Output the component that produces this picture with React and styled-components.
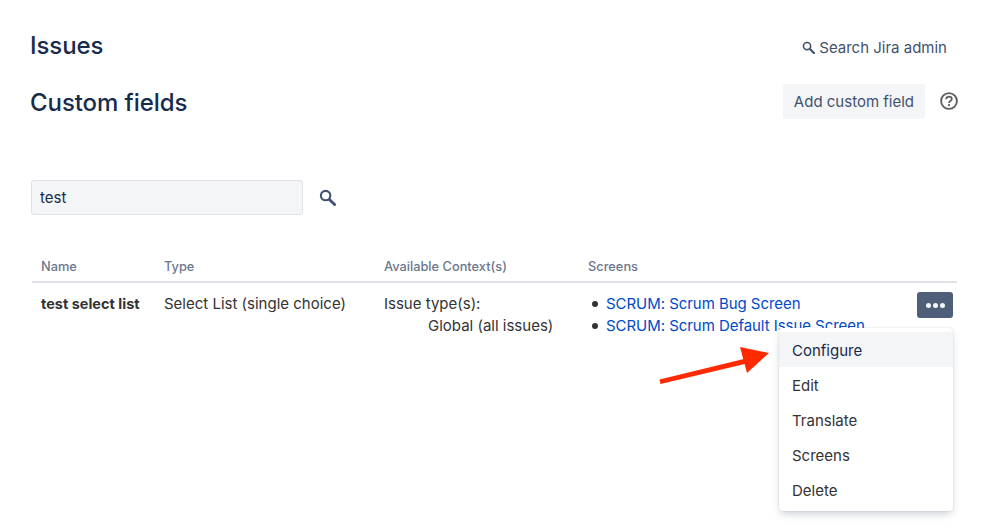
import React from 'react';
import styled, { createGlobalStyle } from 'styled-components';

const GlobalStyle = createGlobalStyle`
  html, body {
    margin: 0;
    background: #fff;
    font-family: Inter, "Liberation Sans", sans-serif;
  }
`;

const Page = styled.div`
  position: relative;
  width: 999px;
  height: 531px;
  padding: 26px 41px 0 30px;
  box-sizing: border-box;
  overflow: hidden;
`;

const TopBar = styled.div`
  display: flex;
  justify-content: space-between;
  align-items: center;
  height: 38px;
`;

const Title = styled.h1`
  margin: 0;
  font-size: 24px;
  font-weight: 500;
  letter-spacing: -0.07px;
  color: #172b4d;
`;

const AdminSearch = styled.div`
  display: flex;
  align-items: center;
  gap: 4px;
  margin: 4px 11px 0 0;
  font-size: 15px;
  color: #42526e;
`;

const HeaderRow = styled.div`
  display: flex;
  justify-content: space-between;
  align-items: center;
  height: 36px;
  margin-top: 20px;
`;

const Actions = styled.div`
  display: flex;
  align-items: center;
  gap: 15px;
  margin-bottom: 2px;
`;

const AddButton = styled.button`
  height: 35px;
  padding: 0 11px;
  border: 0;
  border-radius: 3px;
  background: #f4f5f7;
  color: #42526e;
  font: 400 15px Inter, "Liberation Sans", sans-serif;
`;

const FilterRow = styled.div`
  display: flex;
  align-items: center;
  gap: 16px;
  margin: 60px 0 0 1px;
`;

const FilterInput = styled.div`
  box-sizing: border-box;
  width: 272px;
  height: 35px;
  padding: 0 8px;
  display: flex;
  align-items: center;
  border: 1.5px solid #dfe1e6;
  border-radius: 3px;
  background: #f4f5f7;
  font-size: 15px;
  color: #172b4d;
`;

const Table = styled.div`
  position: relative;
  margin: 38px 1px 0 2px;
`;

const Row = styled.div`
  display: grid;
  grid-template-columns: 123px 220px 204px 1fr;
  padding-left: 9px;
`;

const HeadRow = styled(Row)`
  box-sizing: content-box;
  height: 27px;
  padding-bottom: 1px;
  align-items: center;
  border-bottom: 2px solid #dfe1e6;
  font-size: 12.8px;
  font-weight: 500;
  color: #6b778c;
`;

const BodyRow = styled(Row)`
  padding-top: 10px;
  font-size: 15px;
  line-height: 22px;
  color: #333;
`;

const FieldName = styled.div`
  font-weight: 700;
  font-size: 14.5px;
`;

const ContextValue = styled.div`
  padding-left: 44px;
`;

const ScreenList = styled.ul`
  margin: 0;
  padding: 0;
  list-style: none;
`;

const ScreenItem = styled.li`
  display: flex;
  align-items: center;
  gap: 8px;
  padding-left: 4px;
  white-space: nowrap;

  &::before {
    content: '';
    width: 6px;
    height: 6px;
    border-radius: 50%;
    background: #333;
  }
`;

const ScreenLink = styled.a`
  color: #0049c8;
  letter-spacing: -0.05px;
  text-decoration: none;
`;

const MoreButton = styled.button`
  position: absolute;
  top: 39px;
  right: 4px;
  display: flex;
  align-items: center;
  justify-content: center;
  gap: 2px;
  width: 36px;
  height: 26px;
  padding: 0;
  border: 0;
  border-radius: 3px;
  background: #505f79;
`;

const Dot = styled.span`
  width: 5px;
  height: 5px;
  border-radius: 50%;
  background: #f4f5f7;
`;

const Menu = styled.div`
  position: absolute;
  top: 75px;
  right: 4px;
  box-sizing: border-box;
  width: 174px;
  height: 183px;
  padding: 4px 0;
  border-radius: 3px;
  background: #fff;
  box-shadow: 0 4px 8px -2px rgba(9, 30, 66, 0.25), 0 0 1px rgba(9, 30, 66, 0.31);
`;

const MenuItem = styled.div`
  display: flex;
  align-items: center;
  box-sizing: border-box;
  height: 35px;
  padding: 1px 0 0 13px;
  font-size: 15px;
  color: ${props => (props.active ? '#172b4d' : '#333')};
  background: ${props => (props.active ? '#f4f5f7' : 'transparent')};
`;

const Arrow = styled.svg`
  position: absolute;
  left: 658px;
  top: 346px;
`;

const SearchIcon = ({ size, width = 2.2 }) => (
  <svg width={size} height={size} viewBox="0 0 18 18" fill="none" stroke="#42526e">
    <circle cx="7" cy="7" r="5" strokeWidth={width} />
    <path d="M11 11l5.5 5.5" strokeWidth={width + 0.8} strokeLinecap="round" />
  </svg>
);

const HelpIcon = () => (
  <svg width="18" height="18" viewBox="0 0 18 18" fill="none">
    <circle cx="9" cy="9" r="7.9" stroke="#5e5e5e" strokeWidth="1.9" />
    <path
      d="M6.2 7.2C6.2 5.6 7.5 4.6 9 4.6s2.8.9 2.8 2.4c0 2.1-2.8 2-2.8 3.9"
      stroke="#5e5e5e"
      strokeWidth="1.8"
    />
    <circle cx="9" cy="13.2" r="1.1" fill="#5e5e5e" />
  </svg>
);

const menuItems = ['Configure', 'Edit', 'Translate', 'Screens', 'Delete'];

export default function App() {
  return (
    <Page>
      <GlobalStyle />
      <TopBar>
        <Title>Issues</Title>
        <AdminSearch>
          <SearchIcon size={13} />
          Search Jira admin
        </AdminSearch>
      </TopBar>
      <HeaderRow>
        <Title>Custom fields</Title>
        <Actions>
          <AddButton>Add custom field</AddButton>
          <HelpIcon />
        </Actions>
      </HeaderRow>
      <FilterRow>
        <FilterInput>test</FilterInput>
        <SearchIcon size={17} />
      </FilterRow>
      <Table>
        <HeadRow>
          <div>Name</div>
          <div>Type</div>
          <div>Available Context(s)</div>
          <div>Screens</div>
        </HeadRow>
        <BodyRow>
          <FieldName>test select list</FieldName>
          <div>Select List (single choice)</div>
          <div>
            Issue type(s):
            <ContextValue>Global (all issues)</ContextValue>
          </div>
          <ScreenList>
            <ScreenItem>
              <ScreenLink>SCRUM: Scrum Bug Screen</ScreenLink>
            </ScreenItem>
            <ScreenItem>
              <ScreenLink>SCRUM: Scrum Default Issue Screen</ScreenLink>
            </ScreenItem>
          </ScreenList>
        </BodyRow>
        <MoreButton>
          <Dot />
          <Dot />
          <Dot />
        </MoreButton>
        <Menu>
          {menuItems.map((item, i) => (
            <MenuItem key={item} active={i === 0}>
              {item}
            </MenuItem>
          ))}
        </Menu>
      </Table>
      <Arrow width="112" height="40" viewBox="0 0 112 40">
        <path d="M1.5 33.5L92 11.5L93 16.5L2.5 38Z" fill="#ff2a00" />
        <path d="M82 1L111 7L89 27Z" fill="#ff2a00" />
      </Arrow>
    </Page>
  );
}
